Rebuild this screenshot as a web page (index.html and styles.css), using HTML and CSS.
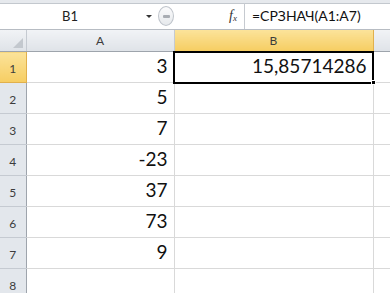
FILE: index.html
```html
<!DOCTYPE html>
<html lang="ru">
<head>
    <meta charset="UTF-8">
    <title>Excel</title>
    <link rel="stylesheet" href="styles.css">
</head>
<body>
    <div class="formula-bar">
        <div class="name-box">
            <span class="name">B1</span>
            <span class="arrow"></span>
        </div>
        <div class="splitter"><span class="grip"></span></div>
        <div class="fx"><i>f</i><sub>x</sub></div>
        <div class="formula">=СРЗНАЧ(A1:A7)</div>
    </div>

    <table class="sheet">
        <colgroup>
            <col class="col-head">
            <col class="col-a">
            <col class="col-b">
            <col class="col-c">
        </colgroup>
        <thead>
            <tr>
                <th class="corner"><span class="tri"></span></th>
                <th>A</th>
                <th class="active">B</th>
                <th></th>
            </tr>
        </thead>
        <tbody>
            <tr><th class="active">1</th><td>3</td><td class="selected">15,85714286</td><td></td></tr>
            <tr><th>2</th><td>5</td><td></td><td></td></tr>
            <tr><th>3</th><td>7</td><td></td><td></td></tr>
            <tr><th>4</th><td>-23</td><td></td><td></td></tr>
            <tr><th>5</th><td>37</td><td></td><td></td></tr>
            <tr><th>6</th><td>73</td><td></td><td></td></tr>
            <tr><th>7</th><td>9</td><td></td><td></td></tr>
            <tr><th>8</th><td></td><td></td><td></td></tr>
        </tbody>
    </table>
</body>
</html>
```

FILE: styles.css
```css
body {
    margin: 0;
    padding: 0;
    background: #fff;
    font-family: Lato, "Noto Sans", sans-serif;
    width: 390px;
    height: 293px;
    overflow: hidden;
}

/* строка формул */
.formula-bar {
    display: flex;
    height: 26px;
    border-top: 3px solid #e6e9ed;
    border-bottom: 1px solid #b7bcc3;
    box-shadow: inset 0 1px 0 #c3c8ce;
    background: #fff;
}

.name-box {
    width: 158px;
    display: flex;
    align-items: center;
}

.name {
    width: 140px;
    text-align: center;
    font-size: 13px;
    color: #222;
}

.arrow {
    border-left: 3px solid transparent;
    border-right: 3px solid transparent;
    border-top: 3px solid #333;
    margin-left: 6px;
}

.splitter {
    width: 16px;
    height: 20px;
    margin-top: 3px;
    border: 1px solid #bfc4cb;
    border-radius: 50%;
    background: linear-gradient(#fbfbfc, #e6e9ec);
    display: flex;
    align-items: center;
    justify-content: center;
    box-sizing: border-box;
}

.grip {
    width: 7px;
    height: 3px;
    background: #a9adb3;
    border-radius: 1px;
}

.fx {
    width: 70px;
    text-align: right;
    padding-right: 7px;
    box-sizing: border-box;
    font-family: "Liberation Serif", serif;
    font-size: 14px;
    color: #333;
    line-height: 26px;
}

.fx sub {
    font-size: 9px;
    font-style: italic;
    vertical-align: -1px;
}

.formula {
    flex: 1;
    border-left: 1px solid #c6cad0;
    padding-left: 7px;
    font-size: 14px;
    line-height: 26px;
    color: #111;
}

/* таблица */
.sheet {
    border-collapse: collapse;
    table-layout: fixed;
    width: 390px;
}

.col-head { width: 26px; }
.col-a { width: 148px; }
.col-b { width: 199px; }
.col-c { width: 17px; }

.sheet thead th {
    height: 21px;
    padding: 0;
    font-weight: normal;
    font-size: 12px;
    color: #3c3c3c;
    background: linear-gradient(#f1f3f6, #dfe3e8);
    border-right: 1px solid #c5cad1;
    border-bottom: 1px solid #9ea4ac;
    vertical-align: middle;
}

.sheet thead th.corner {
    position: relative;
}

.tri {
    position: absolute;
    right: 3px;
    bottom: 3px;
    width: 0;
    height: 0;
    border-left: 10px solid transparent;
    border-bottom: 10px solid #c3c8ce;
}

.sheet tbody th {
    height: 24px;
    padding: 0 0 6px;
    font-weight: normal;
    font-size: 12px;
    line-height: 14px;
    color: #3c3c3c;
    background: #e3e7ec;
    border-right: 1px solid #9ea4ac;
    border-bottom: 1px solid #c5cad1;
    vertical-align: bottom;
}

.sheet th.active {
    background: linear-gradient(#fbe39a, #f6cd62);
    border-color: #e1b04c;
}

.sheet td {
    height: 25px;
    padding: 0 6px 5px 0;
    text-align: right;
    vertical-align: bottom;
    font-size: 19px;
    color: #111;
    line-height: 22px;
    border-right: 1px solid #d9d9d9;
    border-bottom: 1px solid #d9d9d9;
    white-space: nowrap;
}

.sheet td.selected {
    position: relative;
    outline: 2px solid #000;
    outline-offset: -1px;
}

.sheet td.selected::after {
    content: "";
    position: absolute;
    right: -3px;
    bottom: -3px;
    width: 5px;
    height: 5px;
    background: #000;
    border: 1px solid #fff;
    box-sizing: border-box;
}
```
